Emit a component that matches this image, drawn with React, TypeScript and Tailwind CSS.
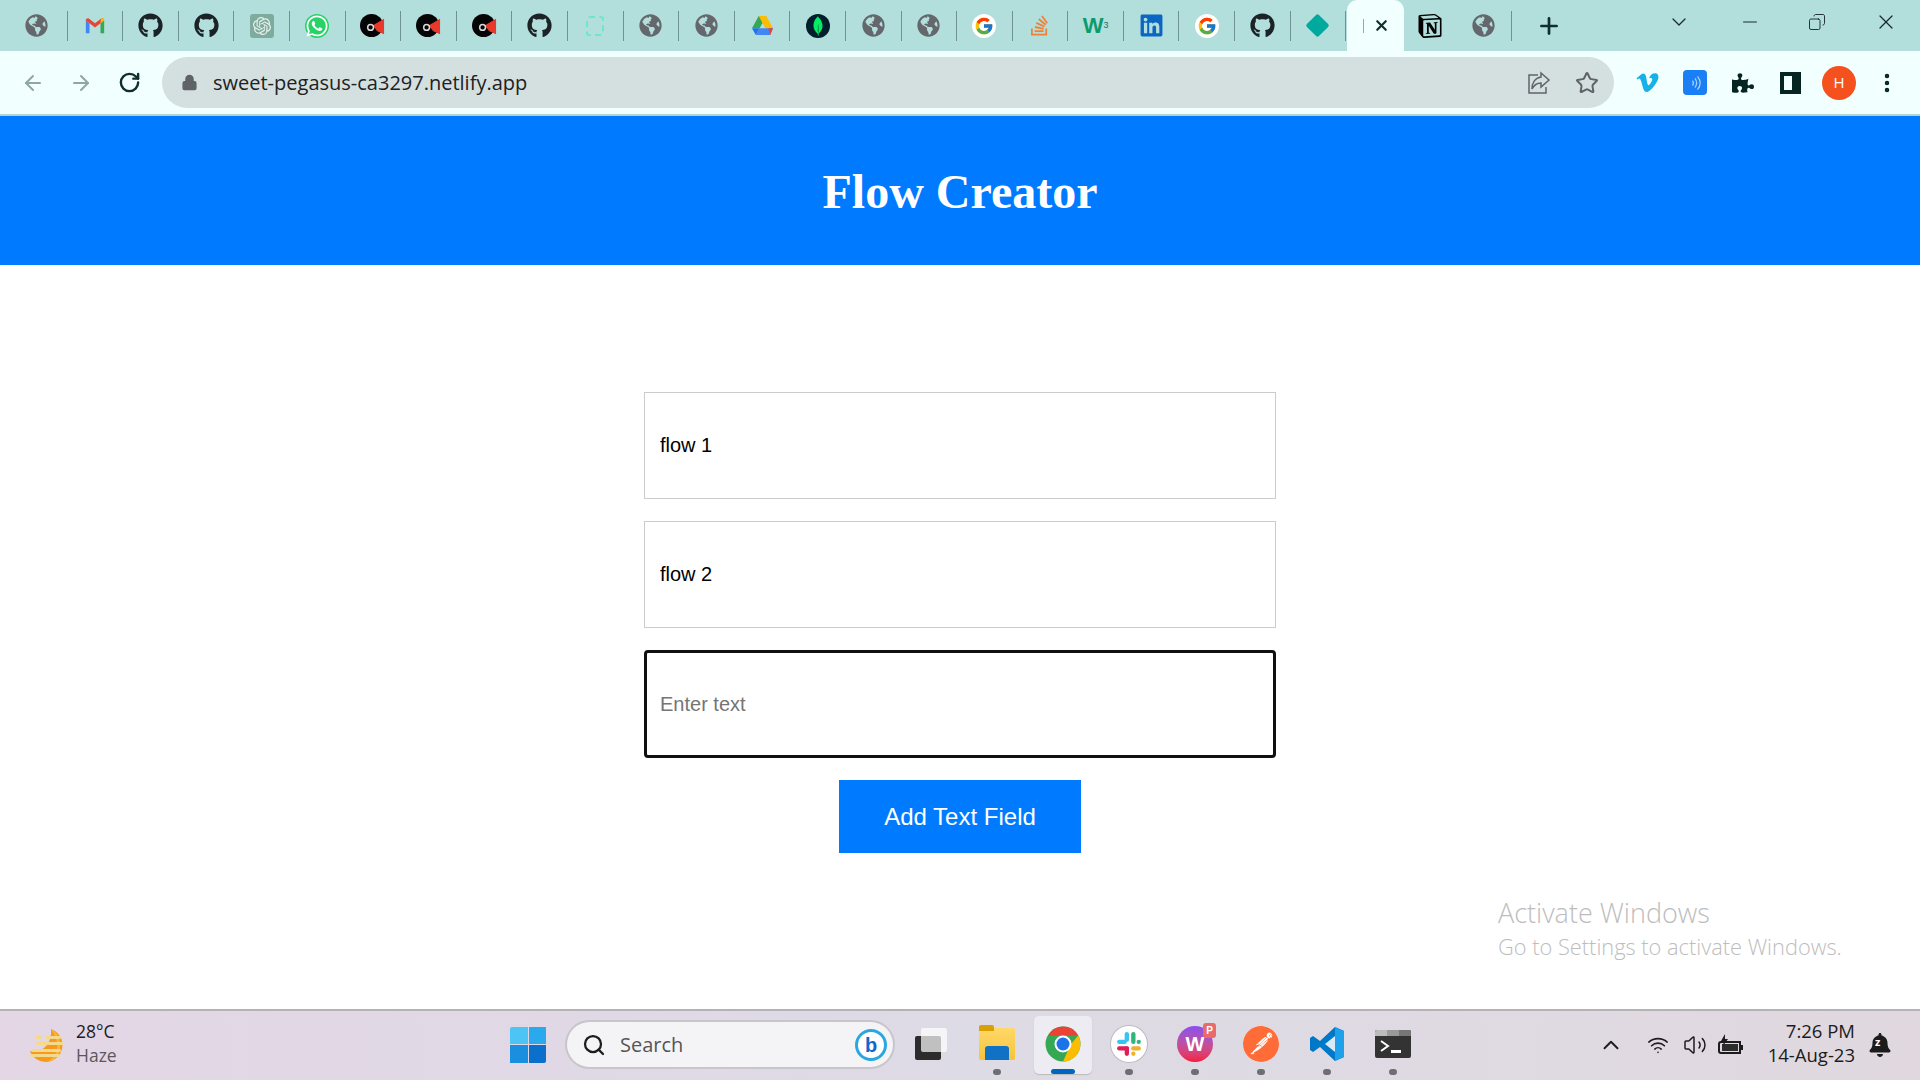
import type { ReactNode } from "react";
import {
  ArrowLeft,
  ArrowRight,
  ChevronDown,
  ChevronUp,
  Copy,
  Lock,
  Minus,
  MoreVertical,
  Plus,
  RotateCw,
  Search,
  Star,
  Volume2,
  Wifi,
  X,
} from "lucide-react";
import {
  FaBell,
  FaGithub,
  FaGlobeAmericas,
  FaLinkedin,
  FaPuzzlePiece,
  FaStackOverflow,
  FaVimeoV,
  FaWhatsapp,
} from "react-icons/fa";
import { FcGoogle } from "react-icons/fc";
import { SiMongodb, SiNotion, SiOpenai, SiPostman } from "react-icons/si";

const ui = "font-['Open_Sans',sans-serif]";

function Globe() {
  return <FaGlobeAmericas className="h-[23px] w-[23px] text-[#64686c]" />;
}

function Github() {
  return <FaGithub className="h-[25px] w-[25px] text-[#1b2326]" />;
}

function Gmail() {
  return (
    <svg viewBox="0 0 24 24" className="h-[22px] w-[24px]">
      <path d="M2 20V6l4 3v11z" fill="#4285f4" />
      <path d="M18 20V9l4-3v14z" fill="#34a853" />
      <path d="M2 6c0-2 2-3 3.500-2L12 9l6.500-5C20 3 22 4 22 6l-4 3-6 4.500L6 9z" fill="#ea4335" />
      <path d="M18 9l.5-5C20 3 22 4 22 6z" fill="#fbbc04" />
    </svg>
  );
}

function Helmet() {
  return (
    <svg viewBox="0 0 26 26" className="h-[25px] w-[25px]">
      <circle cx="12" cy="13" r="12" fill="#050505" />
      <path d="M13 13l12-7v16l-7-3z" fill="#e8392b" />
      <circle cx="11" cy="15" r="3" fill="none" stroke="#ddd" strokeWidth="1.500" />
    </svg>
  );
}

function Drive() {
  return (
    <svg viewBox="0 0 24 22" className="h-[21px] w-[23px]">
      <path d="M8 1h8L9 14H1z" fill="#34a853" />
      <path d="M8 1h8l7 13h-8z" fill="#fbbc04" />
      <path d="M5 21l4-7h14l-3 7z" fill="#4285f4" />
      <path d="M20 21l3-7h-5z" fill="#ea4335" />
      <path d="M1 14h8l-4 7z" fill="#1a73e8" />
    </svg>
  );
}

function Tab({ children }: { children?: ReactNode }) {
  return (
    <div className="flex h-[51px] w-[55.600px] shrink-0 items-center justify-center">
      <div className="flex flex-1 items-center justify-center">{children}</div>
      <div className="h-[30px] w-px bg-[#6f9490]" />
    </div>
  );
}

function TabStrip() {
  return (
    <div className="flex h-[51px] items-center bg-[#b2dfdc] pl-[12px]">
      <Tab>
        <span className="-ml-[6px]">
          <Globe />
        </span>
      </Tab>
      <Tab><Gmail /></Tab>
      <Tab><Github /></Tab>
      <Tab><Github /></Tab>
      <Tab>
        <span className="flex h-[24px] w-[24px] items-center justify-center rounded-[3px] bg-[#7fab9d]">
          <SiOpenai className="h-[18px] w-[18px] text-[#e6f2ee]" />
        </span>
      </Tab>
      <Tab>
        <span className="flex h-[24px] w-[24px] items-center justify-center rounded-full bg-[#25d366]">
          <FaWhatsapp className="h-[24px] w-[24px] text-white" />
        </span>
      </Tab>
      <Tab><Helmet /></Tab>
      <Tab><Helmet /></Tab>
      <Tab><Helmet /></Tab>
      <Tab><Github /></Tab>
      <Tab>
        <span className="h-[20px] w-[18px] rounded-[3px] border-2 border-dashed border-[#6ee7c8]" />
      </Tab>
      <Tab><Globe /></Tab>
      <Tab><Globe /></Tab>
      <Tab><Drive /></Tab>
      <Tab>
        <span className="flex h-[24px] w-[24px] items-center justify-center rounded-full bg-[#001e2b]">
          <SiMongodb className="h-[20px] w-[20px] text-[#00ed64]" />
        </span>
      </Tab>
      <Tab><Globe /></Tab>
      <Tab><Globe /></Tab>
      <Tab>
        <span className="flex h-[24px] w-[24px] items-center justify-center rounded-full bg-white">
          <FcGoogle className="h-[20px] w-[20px]" />
        </span>
      </Tab>
      <Tab><FaStackOverflow className="h-[23px] w-[23px] text-[#ef8236]" /></Tab>
      <Tab>
        <span className="font-['Liberation_Sans',sans-serif] text-[22px] leading-none font-bold text-[#0d9a6c]">
          W<sup className="text-[9px] font-normal text-[#1f6f5c]">3</sup>
        </span>
      </Tab>
      <Tab><FaLinkedin className="h-[25px] w-[25px] text-[#0a66c2]" /></Tab>
      <Tab>
        <span className="flex h-[24px] w-[24px] items-center justify-center rounded-full bg-white">
          <FcGoogle className="h-[20px] w-[20px]" />
        </span>
      </Tab>
      <Tab><Github /></Tab>
      <Tab>
        <span className="h-[17px] w-[17px] rotate-45 rounded-[2px] bg-[#00a99d]" />
      </Tab>
      <div className="ml-[1px] flex h-[51px] w-[57px] items-center justify-center gap-[9px] self-end rounded-t-[10px] bg-[#f1fffe] pl-[2px]">
        <span className="h-[14px] w-px bg-[#9aa8a7]" />
        <X className="h-[17px] w-[17px] text-[#0f2e2d]" strokeWidth={3} />
      </div>
      <div className="flex h-[51px] w-[52px] items-center justify-center">
        <SiNotion className="h-[24px] w-[24px] text-black" />
      </div>
      <Tab><Globe /></Tab>
      <Plus className="ml-[24px] h-[26px] w-[26px] text-[#0f2e2d]" strokeWidth={2.500} />
      <div className="ml-auto flex items-center pb-[8px] text-[#1b2b2a]">
        <ChevronDown className="mr-[48px] h-[24px] w-[24px]" strokeWidth={1.250} />
        <Minus className="mr-[47px] h-[22px] w-[22px]" strokeWidth={1.250} />
        <Copy className="mr-[48px] h-[18px] w-[18px] -scale-x-100" strokeWidth={1.250} />
        <X className="mr-[22px] h-[24px] w-[24px]" strokeWidth={1.250} />
      </div>
    </div>
  );
}

function Toolbar() {
  return (
    <div className="flex h-[65px] items-center border-b-2 border-[#b3d2d0] bg-[#f1fffe]">
      <div className="flex w-[162px] items-center pl-[21px]">
        <ArrowLeft className="h-[24px] w-[24px] text-[#8fa6a4]" strokeWidth={2} />
        <ArrowRight className="ml-[24px] h-[24px] w-[24px] text-[#8fa6a4]" strokeWidth={2} />
        <RotateCw className="ml-[25px] h-[23px] w-[23px] text-[#0f2e2d]" strokeWidth={2.500} />
      </div>
      <div className="flex h-[51px] w-[1452px] items-center rounded-full bg-[#d4e0df] pr-[15px] pl-[19px]">
        <Lock className="h-[17px] w-[17px] fill-[#5f6368] text-[#5f6368]" />
        <span className={`${ui} ml-[15px] text-[20px] text-[#202124]`}>sweet-pegasus-ca3297.netlify.app</span>
        <svg viewBox="0 0 24 24" className="ml-auto h-[24px] w-[24px]" fill="none" stroke="#5f6368" strokeWidth="1.500">
          <path d="M11 4H2v18h17v-6" />
          <path d="M14 2l8 7-8 7v-4c-4 0-7 2-9 6 0-6 3-11 9-12z" />
        </svg>
        <Star className="ml-[24px] h-[24px] w-[24px] text-[#5f6368]" strokeWidth={2} />
      </div>
      <div className="flex flex-1 items-center pl-[21px]">
        <FaVimeoV className="h-[25px] w-[25px] text-[#17b1ea]" />
        <span className="ml-[23px] flex h-[25px] w-[24px] items-center justify-center rounded-[4px] bg-[#1a7ef5]">
          <svg viewBox="0 0 24 24" className="h-[20px] w-[20px]" fill="none" stroke="#a9d2ff" strokeWidth="1.500">
            <path d="M9 9c1.500 2 1.500 4 0 6" />
            <path d="M12 6.500c2.500 3.500 2.500 7.500 0 11" />
            <path d="M15 4c4 5 4 11 0 16" />
          </svg>
        </span>
        <FaPuzzlePiece className="ml-[25px] h-[22px] w-[22px] text-[#052422]" />
        <span className="ml-[26px] h-[22px] w-[21px] border-[4px] border-r-[9px] border-[#052422]" />
        <span className={`${ui} ml-[21px] flex h-[34px] w-[34px] items-center justify-center rounded-full bg-[#f4511e] text-[15px] text-white`}>
          H
        </span>
        <MoreVertical className="ml-[19px] h-[24px] w-[24px] text-[#052422]" strokeWidth={2.500} />
      </div>
    </div>
  );
}

function FlowField({ value }: { value: string }) {
  return (
    <input
      readOnly
      value={value}
      className="h-[107px] w-[632px] border border-[#ccc] bg-white px-[15px] font-['Liberation_Sans',sans-serif] text-[20px] text-black"
    />
  );
}

function Page() {
  return (
    <main className="relative flex-1 bg-white">
      <header className="flex h-[149px] items-center justify-center bg-[#007bff]">
        <h1 className="pt-[2px] font-['Liberation_Serif',serif] text-[48px] font-bold text-white">Flow Creator</h1>
      </header>
      <div className="flex flex-col items-center gap-[22px] pt-[127px]">
        <FlowField value="flow 1" />
        <FlowField value="flow 2" />
        <input
          readOnly
          placeholder="Enter text"
          className="h-[108px] w-[632px] rounded-[4px] border-[3px] border-[#101010] bg-white px-[13px] font-['Liberation_Sans',sans-serif] text-[20px] placeholder:text-[#757575]"
        />
        <button className="h-[73px] w-[242px] bg-[#007bff] font-['Liberation_Sans',sans-serif] text-[24px] text-white">
          Add Text Field
        </button>
      </div>
      {/* watermark sits over the page */}
      <div className={`${ui} absolute top-[778px] left-[1498px] text-[#bdbdbd]`}>
        <div className="text-[27px] leading-[37px] font-light whitespace-nowrap">Activate Windows</div>
        <div className="text-[21.800px] leading-[32px] font-light whitespace-nowrap">Go to Settings to activate Windows.</div>
      </div>
    </main>
  );
}

function TaskIcon({ children, dot, active }: { children: ReactNode; dot?: boolean; active?: boolean }) {
  return (
    <div
      className={`relative flex h-[58px] w-[58px] items-center justify-center rounded-[5px] pb-[2px] ${active ? "bg-[#edecf2] shadow-[0_1px_1px_#bbb]" : ""}`}
    >
      {children}
      {dot && <span className="absolute -bottom-[1px] left-[25px] h-[6px] w-[8px] rounded-full bg-[#6e6e72]" />}
      {active && <span className="absolute bottom-0 left-[17px] h-[5px] w-[24px] rounded-full bg-[#0067c0]" />}
    </div>
  );
}

function ChromeLogo() {
  return (
    <svg viewBox="0 0 36 36" className="h-[36px] w-[36px]">
      <circle cx="18" cy="18" r="17.500" fill="#34a853" />
      <path d="M18 .5A17.500 17.500 0 0 1 33.200 9.500L18 9.500 H18 L3 10A17.500 17.500 0 0 1 18 .5z" fill="#ea4335" />
      <path d="M33.200 9.500A17.500 17.500 0 0 1 18 35.500L26 18z" fill="#fbbc04" />
      <circle cx="18" cy="18" r="8.500" fill="#fff" />
      <circle cx="18" cy="18" r="6.500" fill="#1a73e8" />
    </svg>
  );
}

function SlackLogo() {
  return (
    <span className="flex h-[36px] w-[36px] items-center justify-center rounded-full bg-white shadow-[0_0_0_1px_#bbb]">
      <svg viewBox="0 0 24 24" className="h-[26px] w-[26px]">
        <rect x="8" y="1" width="4" height="9" rx="2" fill="#36c5f0" />
        <rect x="1" y="8" width="9" height="4" rx="2" fill="#36c5f0" />
        <rect x="14" y="1" width="4" height="11" rx="2" fill="#2eb67d" />
        <rect x="19" y="8" width="4" height="4" rx="2" fill="#2eb67d" />
        <rect x="14" y="14" width="9" height="4" rx="2" fill="#ecb22e" />
        <rect x="14" y="19" width="4" height="4" rx="2" fill="#ecb22e" />
        <rect x="1" y="14" width="11" height="4" rx="2" fill="#e01e5a" />
        <rect x="8" y="14" width="4" height="9" rx="2" fill="#e01e5a" />
      </svg>
    </span>
  );
}

function Taskbar() {
  return (
    <footer className="flex h-[71px] shrink-0 items-center border-t-2 border-[#b6b1b6] bg-gradient-to-r from-[#e4d6e5] via-[#dddbe5] to-[#e1d8df] pb-[2px] text-[#1c1c1c]">
      <div className="flex w-[510px] items-center pl-[29px]">
        <svg viewBox="0 0 36 36" className="h-[36px] w-[36px]">
          <path d="M22 2a17 17 0 0 1-4 33C9 35 3 30 1 24c14 2 22-8 21-22z" fill="#f59a1f" />
          <path d="M22 2c12 6 14 30-4 33C32 28 30 12 22 2z" fill="#f9b53f" />
          <g fill="#f5d98a">
            <rect x="6" y="9" width="7" height="3" rx="1.500" />
            <rect x="16" y="9" width="16" height="3" rx="1.500" />
            <rect x="7" y="15" width="28" height="3" rx="1.500" />
            <rect x="2" y="22" width="30" height="3" rx="1.500" />
            <rect x="1" y="27" width="30" height="3" rx="1.500" />
          </g>
        </svg>
        <div className={`${ui} ml-[11px] -translate-y-[2px] text-[17.500px] leading-[24px]`}>
          <div>28°C</div>
          <div className="text-[#5b5760]">Haze</div>
        </div>
      </div>
      <div className="flex items-center">
        <div className="grid h-[36px] w-[36px] grid-cols-2 gap-[1px]">
          <span className="rounded-tl-[2px] bg-[#4cc5f5]" />
          <span className="bg-[#2aa9ec]" />
          <span className="bg-[#1a8fe0]" />
          <span className="rounded-br-[2px] bg-[#0b70cc]" />
        </div>
        <div className="ml-[21px] flex h-[45px] w-[326px] items-center rounded-full bg-[#f4f4f7] pr-[6px] pl-[15px] shadow-[0_0_0_2px_#c8c5cb]">
          <Search className="h-[24px] w-[24px] text-[#1c1c1c]" strokeWidth={2.250} />
          <span className={`${ui} ml-[14px] text-[20px] text-[#555]`}>Search</span>
          <span className="ml-auto flex h-[32px] w-[32px] items-center justify-center rounded-full border-[3px] border-[#2ba7e0] bg-white font-['Liberation_Sans',sans-serif] text-[20px] leading-none font-bold text-[#1466c8]">
            b
          </span>
        </div>
        <div className="ml-[9px] flex gap-[8px]">
          <TaskIcon>
            <span className="relative h-[36px] w-[36px]">
              <span className="absolute bottom-[2px] left-[2px] h-[24px] w-[26px] rounded-[2px] bg-[#2c2c2c]" />
              <span className="absolute top-[2px] right-[2px] h-[24px] w-[26px] rounded-[2px] bg-white/70" />
            </span>
          </TaskIcon>
          <TaskIcon dot>
            <span className="relative h-[32px] w-[36px] rounded-[2px] bg-gradient-to-b from-[#ffd869] to-[#f7c337]">
              <span className="absolute -top-[3px] left-0 h-[6px] w-[15px] rounded-t-[2px] bg-[#dba000]" />
              <span className="absolute right-[6px] bottom-0 left-[6px] h-[14px] rounded-t-[3px] bg-[#0f72c4]" />
            </span>
          </TaskIcon>
          <TaskIcon active>
            <ChromeLogo />
          </TaskIcon>
          <TaskIcon dot>
            <SlackLogo />
          </TaskIcon>
          <TaskIcon dot>
            <span className="relative flex h-[36px] w-[36px] items-center justify-center rounded-full bg-gradient-to-b from-[#8a4df0] to-[#f5163f] font-['Liberation_Sans',sans-serif] text-[20px] font-bold text-white">
              W
              <span className="absolute -top-[3px] -right-[3px] flex h-[15px] w-[13px] items-center justify-center rounded-[3px] bg-[#e86a6a] text-[10px]">
                P
              </span>
            </span>
          </TaskIcon>
          <TaskIcon dot>
            <span className="flex h-[36px] w-[36px] items-center justify-center rounded-full bg-white">
              <SiPostman className="h-[36px] w-[36px] text-[#ff6c37]" />
            </span>
          </TaskIcon>
          <TaskIcon dot>
            <svg viewBox="0 0 36 36" className="h-[36px] w-[36px]">
              <path d="M26 1l9 4v26l-9 4-15-14-7 5-3-2v-12l3-2 7 5z" fill="#0078c8" />
              <path d="M26 1l9 4v26l-9 4z" fill="#1fa0ea" />
              <path d="M26 10v16l-10-8z" fill="#f0f6fb" fillOpacity="0.9" />
            </svg>
          </TaskIcon>
          <TaskIcon dot>
            <svg viewBox="0 0 36 28" className="h-[28px] w-[36px]">
              <rect width="36" height="28" rx="2" fill="#333" />
              <path d="M0 2a2 2 0 0 1 2-2h10v6H0z" fill="#bbb" />
              <path d="M12 0h12v6H12z" fill="#999" />
              <path d="M24 0h10a2 2 0 0 1 2 2v4H24z" fill="#777" />
              <path d="M6 11l7 5-7 5" fill="none" stroke="#fff" strokeWidth="2" />
              <rect x="16" y="20" width="10" height="3" fill="#fff" />
            </svg>
          </TaskIcon>
        </div>
      </div>
      <div className="ml-auto flex items-center pr-[29px]">
        <ChevronUp className="h-[26px] w-[26px]" strokeWidth={1.750} />
        <Wifi className="ml-[23px] h-[22px] w-[22px]" strokeWidth={1.750} />
        <Volume2 className="ml-[14px] h-[24px] w-[24px]" strokeWidth={1.500} />
        <svg viewBox="0 0 26 22" className="ml-[11px] h-[22px] w-[26px]">
          <path d="M3 8h19v11H3a2 2 0 0 1-2-2v-7a2 2 0 0 1 2-2z" fill="none" stroke="#1c1c1c" strokeWidth="2" />
          <rect x="4" y="10" width="16" height="7" fill="#2c2c2c" />
          <rect x="23" y="11" width="2" height="5" fill="#1c1c1c" />
          <path d="M7 0L3 7h3l-1 5 5-7H7z" fill="#1c1c1c" />
        </svg>
        <div className={`${ui} ml-[24px] -translate-y-[2px] text-right text-[18.500px] leading-[24px]`}>
          <div>7:26 PM</div>
          <div>14-Aug-23</div>
        </div>
        <span className="relative ml-[14px] h-[24px] w-[22px]">
          <FaBell className="h-[24px] w-[22px] text-[#1c1c1c]" />
          <span className={`${ui} absolute top-[2px] left-[6px] text-[11px] leading-[14px] font-bold text-white`}>z</span>
        </span>
      </div>
    </footer>
  );
}

export default function App() {
  return (
    <div className="flex h-screen flex-col overflow-hidden">
      <TabStrip />
      <Toolbar />
      <Page />
      <Taskbar />
    </div>
  );
}
